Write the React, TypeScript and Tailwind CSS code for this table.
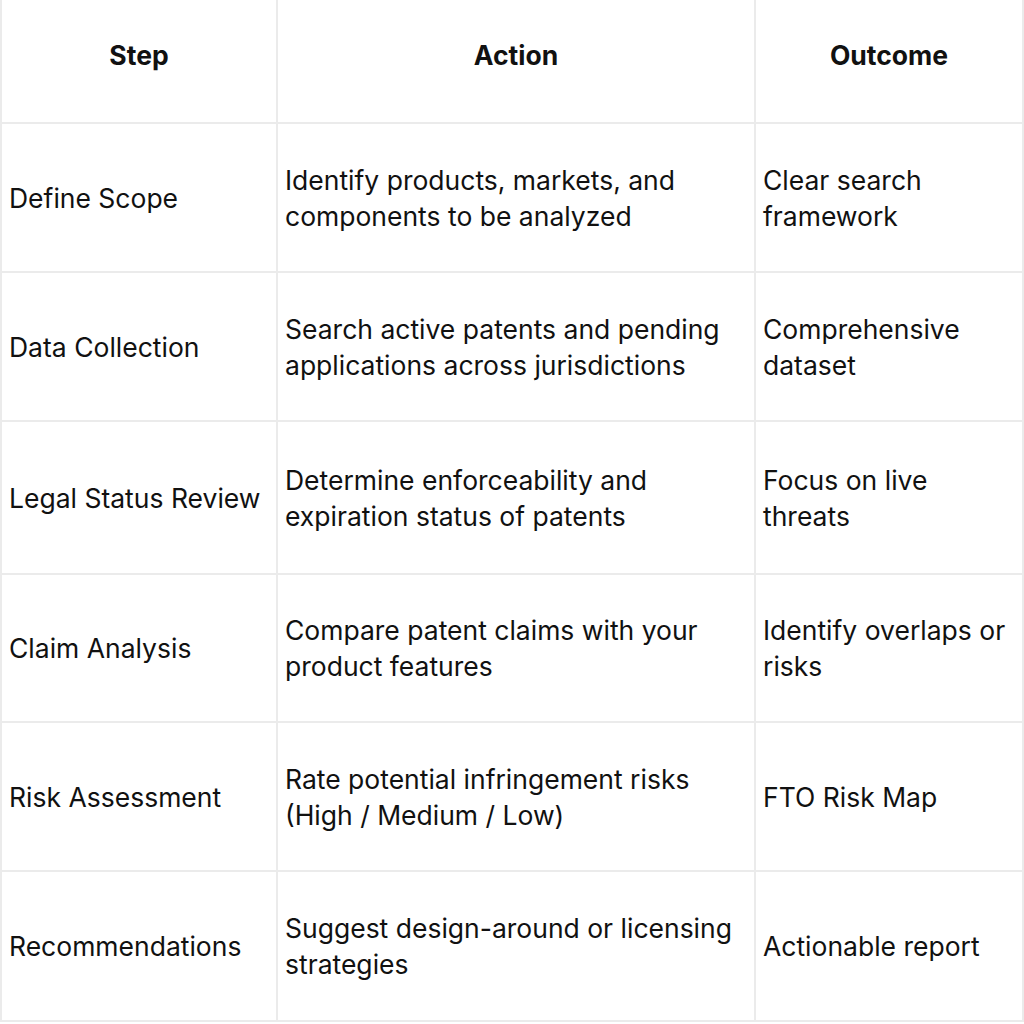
import React from 'react';

const rows = [
  { step: 'Define Scope', action: 'Identify products, markets, and components to be analyzed', outcome: 'Clear search framework', h: 'h-[149px]' },
  { step: 'Data Collection', action: 'Search active patents and pending applications across jurisdictions', outcome: 'Comprehensive dataset', h: 'h-[149px]' },
  { step: 'Legal Status Review', action: 'Determine enforceability and expiration status of patents', outcome: 'Focus on live threats', h: 'h-[153px]' },
  { step: 'Claim Analysis', action: 'Compare patent claims with your product features', outcome: 'Identify overlaps or risks', h: 'h-[148px]' },
  { step: 'Risk Assessment', action: 'Rate potential infringement risks (High / Medium / Low)', outcome: 'FTO Risk Map', h: 'h-[149px]' },
  { step: 'Recommendations', action: 'Suggest design-around or licensing strategies', outcome: 'Actionable report', h: 'h-[150px]' },
];

const cell = 'border-r-2 border-b-2 border-[#ebebeb] flex items-center';

export default function App() {
  return (
    <div className="w-[1024px] h-[1024px] bg-white text-[#111111] font-['Inter',sans-serif] text-[26.5px] leading-[36px]">
      <div className="grid grid-cols-[278px_478px_268px]">
        <div className={`${cell} border-l-2 h-[124px] justify-center font-bold pb-3`}>Step</div>
        <div className={`${cell} h-[124px] justify-center font-bold pb-3`}>Action</div>
        <div className={`${cell} h-[124px] justify-center font-bold pb-3`}>Outcome</div>
        {rows.map((r) => (
          <React.Fragment key={r.step}>
            <div className={`${cell} ${r.h} border-l-2 pl-[7px]`}>{r.step}</div>
            <div className={`${cell} ${r.h} pl-[7px] pr-2`}>{r.action}</div>
            <div className={`${cell} ${r.h} pl-[7px] pr-1`}>{r.outcome}</div>
          </React.Fragment>
        ))}
      </div>
    </div>
  );
}
